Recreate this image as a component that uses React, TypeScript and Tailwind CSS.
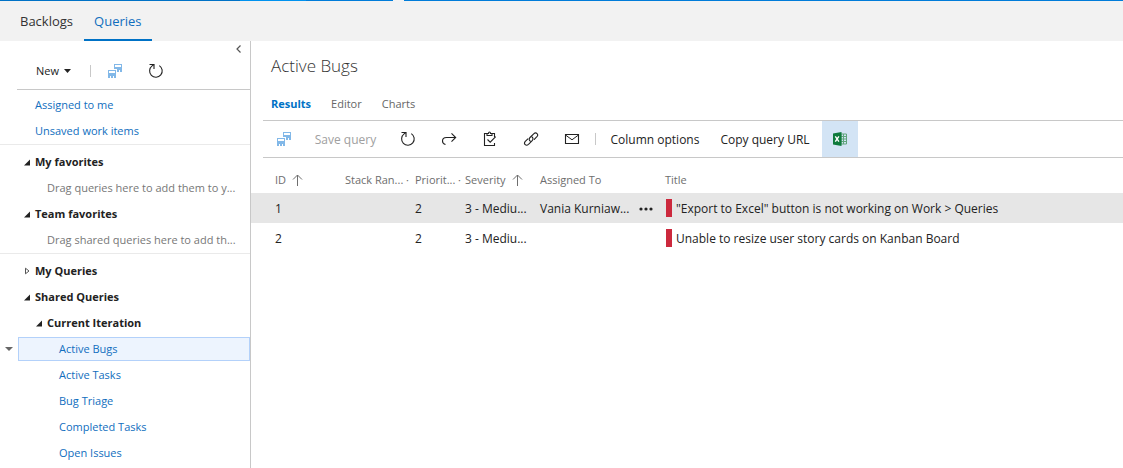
import type { ReactNode } from "react";

function SaveAllIcon() {
  return (
    <svg width="16" height="16" viewBox="0 0 16 16" fill="#82b8e8" shapeRendering="crispEdges" aria-hidden="true">
      <path d="M7 1h8v8h-2V7h-1v2h-2V6H7zM8 2v2h6V2z" fillRule="evenodd" />
      <path d="M1 7h8v8H7v-2H6v2H4v-2H3v2H1zM2 8v2h6V8z" fillRule="evenodd" />
    </svg>
  );
}

function RefreshIcon() {
  return (
    <svg width="16" height="16" viewBox="0 0 16 16" fill="none" stroke="#222" strokeWidth="1.1" aria-hidden="true">
      <path d="M11.3 2.6a6.3 6.3 0 1 1-7.2.3L6 1.500" />
      <path d="M1.5 1.500h4.500v4.500" />
    </svg>
  );
}

function RedoIcon() {
  return (
    <svg width="16" height="16" viewBox="0 0 16 16" fill="none" stroke="#222" strokeWidth="1.1" aria-hidden="true">
      <path d="M4.500 13.500C2.500 13 1.500 11.800 1.500 10c0-2.200 1.800-3.500 4-3.500h9" />
      <path d="M10.500 2.300l4.200 4.200-4.200 4.200" />
    </svg>
  );
}

function ClipboardIcon() {
  return (
    <svg width="16" height="16" viewBox="0 0 16 16" fill="none" stroke="#222" strokeWidth="1.1" aria-hidden="true">
      <path d="M12.500 6V2.500H10M5 2.500H2.500v12h10V12" />
      <path d="M5 4.500v-2h1.500c0-2 2-2 2 0H10v2z" />
      <path d="M5.500 8.500l2.700 2.700 5.500-5.500" />
    </svg>
  );
}

function LinkIcon() {
  return (
    <svg width="16" height="16" viewBox="0 0 16 16" fill="none" stroke="#222" strokeWidth="1.1" strokeLinecap="round" aria-hidden="true">
      <path d="M7.400 10.300C5.900 9.300 5.900 7.600 7 6.500l3.700-3.700c2.500-2.300 5.300.6 3.200 2.900l-2.600 2.600" />
      <path d="M8.800 5.800c1.500 1 1.500 2.700.4 3.800l-3.700 3.700c-2.500 2.300-5.300-.6-3.200-2.900l2.600-2.600" />
    </svg>
  );
}

function MailIcon() {
  return (
    <svg width="16" height="16" viewBox="0 0 16 16" fill="none" stroke="#222" aria-hidden="true">
      <path d="M1.500 3.500h13v9h-13z" strokeWidth="1.100" />
      <path d="M1.500 4L8 8.800 14.500 4" />
    </svg>
  );
}

function ExcelIcon() {
  return (
    <svg width="16" height="16" viewBox="0 0 16 16" aria-hidden="true">
      <path d="M9 3h5.500v10H9z" fill="#d3e4f5" stroke="#5fa57c" />
      <path d="M9 5.500h5M9 8h5M9 10.500h5M11.500 3v10" stroke="#5fa57c" />
      <path d="M1 2.500L9.500 1v14L1 13.500z" fill="#0e7a3c" />
      <path d="M3.300 5.300l3.600 5.400M6.900 5.300l-3.600 5.400" stroke="#fff" strokeWidth="1.400" />
    </svg>
  );
}

function SortIcon() {
  return (
    <svg width="12" height="12" viewBox="0 0 12 12" fill="none" stroke="#6e6e6e" aria-hidden="true">
      <path d="M5.500 12V1M1 5.500L5.500 1 10 5.500" />
    </svg>
  );
}

function TreeArrow({ open }: { open: boolean }) {
  return (
    <svg width="7" height="8" viewBox="0 0 7 8" className="shrink-0" aria-hidden="true">
      {open ? <path d="M6 1.500v6H0z" fill="#222" /> : <path d="M1.500 1.200v5.600L5 4z" fill="none" stroke="#555" />}
    </svg>
  );
}

function ToolButton({ label, children }: { label: string; children: ReactNode }) {
  return (
    <button type="button" aria-label={label} className="flex h-9 w-[41px] shrink-0 items-center justify-center">
      {children}
    </button>
  );
}

function Folder({ name, open = true, nested = false }: { name: string; open?: boolean; nested?: boolean }) {
  return (
    <button
      type="button"
      aria-expanded={open}
      className={`flex h-[26px] w-full items-center gap-1 font-bold text-[#222] ${nested ? "pl-9" : "pl-6"}`}
    >
      <TreeArrow open={open} />
      {name}
    </button>
  );
}

function Hint({ children }: { children: ReactNode }) {
  return <p className="flex h-[26px] items-center pl-[47px] whitespace-nowrap text-[#777]">{children}</p>;
}

function QueryLink({ name }: { name: string }) {
  return (
    <a href="#" className="flex h-[26px] items-center pl-[59px] text-[#106ebe]">
      {name}
    </a>
  );
}

function Sidebar() {
  return (
    <aside className="flex w-[251px] shrink-0 flex-col border-r border-[#c8c8c8] text-[11px]">
      <div className="flex h-4 items-center justify-end pr-2">
        <button type="button" aria-label="Collapse pane">
          <svg width="7" height="8" viewBox="0 0 7 8" fill="none" stroke="#555" aria-hidden="true">
            <path d="M5.500 .5L2 4l3.500 3.500" strokeWidth="1.200" />
          </svg>
        </button>
      </div>
      <div className="ml-[17px] flex h-[33px] items-start border-b border-[#c8c8c8] pl-[19px]">
        <button type="button" className="flex h-7 w-[35px] items-center justify-between text-[11px] text-[#222]">
          New
          <svg width="7" height="4" viewBox="0 0 7 4" className="shrink-0" aria-hidden="true">
            <path d="M0 0h7L3.500 4z" fill="#222" />
          </svg>
        </button>
        <span className="mt-2 ml-[19px] h-3 w-px bg-[#c8c8c8]" />
        <div className="-mt-1 ml-[3px] flex">
          <ToolButton label="Save all">
            <SaveAllIcon />
          </ToolButton>
          <ToolButton label="Refresh">
            <RefreshIcon />
          </ToolButton>
        </div>
      </div>
      <nav>
        <div className="border-b border-[#eaeaea] pt-0.5">
          <a href="#" className="flex h-[26px] items-center pl-[35px] text-[#106ebe]">
            Assigned to me
          </a>
          <a href="#" className="flex h-[26px] items-center pl-[35px] text-[#106ebe]">
            Unsaved work items
          </a>
        </div>
        <div className="border-b border-[#eaeaea] pt-1">
          <Folder name="My favorites" />
          <Hint>Drag queries here to add them to y...</Hint>
          <Folder name="Team favorites" />
          <Hint>Drag shared queries here to add th...</Hint>
        </div>
        <div className="pt-1">
          <Folder name="My Queries" open={false} />
          <Folder name="Shared Queries" />
          <Folder name="Current Iteration" nested />
          <div className="flex h-[26px] items-center">
            <button type="button" aria-label="Query menu" className="flex w-[18px] justify-center">
              <svg width="8" height="4" viewBox="0 0 8 4" aria-hidden="true">
                <path d="M0 0h8L4 4z" fill="#666" />
              </svg>
            </button>
            <a
              href="#"
              aria-current="page"
              className="flex h-6 flex-1 items-center border border-[#b3d1fa] bg-[#edf4fe] pl-10 text-[#106ebe]"
            >
              Active Bugs
            </a>
          </div>
          <QueryLink name="Active Tasks" />
          <QueryLink name="Bug Triage" />
          <QueryLink name="Completed Tasks" />
          <QueryLink name="Open Issues" />
        </div>
      </nav>
    </aside>
  );
}

function Toolbar() {
  return (
    <div className="ml-3 flex h-[38px] items-center border-y border-[#c8c8c8] text-xs whitespace-nowrap text-[#222]">
      <ToolButton label="Save all">
        <SaveAllIcon />
      </ToolButton>
      <button type="button" disabled className="h-9 w-[83px] shrink-0 pt-0.5 text-[#a0a0a0]">
        Save query
      </button>
      <ToolButton label="Refresh">
        <RefreshIcon />
      </ToolButton>
      <ToolButton label="Redo">
        <RedoIcon />
      </ToolButton>
      <ToolButton label="Bulk edit">
        <ClipboardIcon />
      </ToolButton>
      <ToolButton label="Link">
        <LinkIcon />
      </ToolButton>
      <ToolButton label="Email">
        <MailIcon />
      </ToolButton>
      <span className="mx-[3px] h-3 w-px shrink-0 bg-[#c8c8c8]" />
      <button type="button" className="h-9 w-28 shrink-0 pt-0.5">
        Column options
      </button>
      <button type="button" className="h-9 w-[108px] shrink-0 pt-0.5">
        Copy query URL
      </button>
      <button
        type="button"
        aria-label="Open in Excel"
        className="ml-[3px] flex h-9 w-9 shrink-0 items-center justify-center bg-[#d3e4f5]"
      >
        <ExcelIcon />
      </button>
    </div>
  );
}

const rows = [
  { id: 1, owner: "Vania Kurniaw...", title: '"Export to Excel" button is not working on Work > Queries', selected: true },
  { id: 2, owner: "", title: "Unable to resize user story cards on Kanban Board", selected: false },
];

function Results() {
  return (
    <table className="mt-[9px] w-full table-fixed text-left text-xs whitespace-nowrap text-[#222]">
      <colgroup>
        <col className="w-[94px]" />
        <col className="w-[70px]" />
        <col className="w-[50px]" />
        <col className="w-[75px]" />
        <col className="w-[125px]" />
        <col />
      </colgroup>
      <thead>
        <tr className="h-[26px] text-[11px] text-[#6e6e6e]">
          <th className="pl-6 font-normal">
            <span className="flex items-center gap-1.5">
              ID <SortIcon />
            </span>
          </th>
          <th className="font-normal">
            <span className="flex justify-between pr-1.5">
              Stack Ran...<span>·</span>
            </span>
          </th>
          <th className="font-normal">
            <span className="flex justify-between pr-1">
              Priorit...<span>·</span>
            </span>
          </th>
          <th className="font-normal">
            <span className="flex items-center gap-1.5">
              Severity <SortIcon />
            </span>
          </th>
          <th className="font-normal">Assigned To</th>
          <th className="font-normal">Title</th>
        </tr>
      </thead>
      <tbody>
        {rows.map((row) => (
          <tr key={row.id} className={`h-[30px] ${row.selected ? "bg-[#e6e6e6]" : "bg-white"}`}>
            <td className="pt-0.5 pl-6">{row.id}</td>
            <td />
            <td className="pt-0.5">2</td>
            <td className="pt-0.5">3 - Mediu...</td>
            <td className="pt-0.5">
              {row.owner && (
                <span className="flex items-center justify-between pr-3">
                  {row.owner}
                  <button type="button" aria-label="More actions">
                    <svg width="14" height="4" viewBox="0 0 14 4" fill="#222" aria-hidden="true">
                      <circle cx="2" cy="2" r="1.600" />
                      <circle cx="7" cy="2" r="1.600" />
                      <circle cx="12" cy="2" r="1.600" />
                    </svg>
                  </button>
                </span>
              )}
            </td>
            <td>
              <span className="flex items-center gap-1 pl-px">
                <span className="h-[18px] w-1.5 shrink-0 bg-[#cc293d]" />
                <span className="pt-0.5">{row.title}</span>
              </span>
            </td>
          </tr>
        ))}
      </tbody>
    </table>
  );
}

export default function App() {
  return (
    <div className="flex min-h-screen flex-col bg-white font-['Open_Sans','Noto_Sans',sans-serif]">
      <div className="flex h-px">
        <span className="w-60 bg-[#0072c6]" />
        <span className="w-[66px] bg-[#0092ef]" />
        <span className="w-[87px] bg-[#007cd9]" />
        <span className="w-[11px] bg-[#f2f2f2]" />
        <span className="flex-1 bg-[#007cd9]" />
      </div>
      <header className="flex h-10 bg-[#f2f2f2] pl-2 text-[13px]">
        <a href="#" className="flex items-center px-3 pt-0.5 text-[#333]">
          Backlogs
        </a>
        <a href="#" aria-current="page" className="-ml-px flex items-center border-b-2 border-[#0072c6] px-2.5 pt-1 text-[#106ebe]">
          Queries
        </a>
      </header>
      <div className="flex flex-1">
        <Sidebar />
        <main className="min-w-0 flex-1">
          <h1 className="mt-3 pl-5 text-[17px] leading-[26px] font-light text-[#333]">Active Bugs</h1>
          <nav className="mt-[13px] flex h-7 items-start gap-5 pl-5 text-[11px] leading-6 text-[#666]">
            <a href="#" aria-current="page" className="font-bold text-[#0072c6]">
              Results
            </a>
            <a href="#">Editor</a>
            <a href="#">Charts</a>
          </nav>
          <Toolbar />
          <Results />
        </main>
      </div>
    </div>
  );
}
